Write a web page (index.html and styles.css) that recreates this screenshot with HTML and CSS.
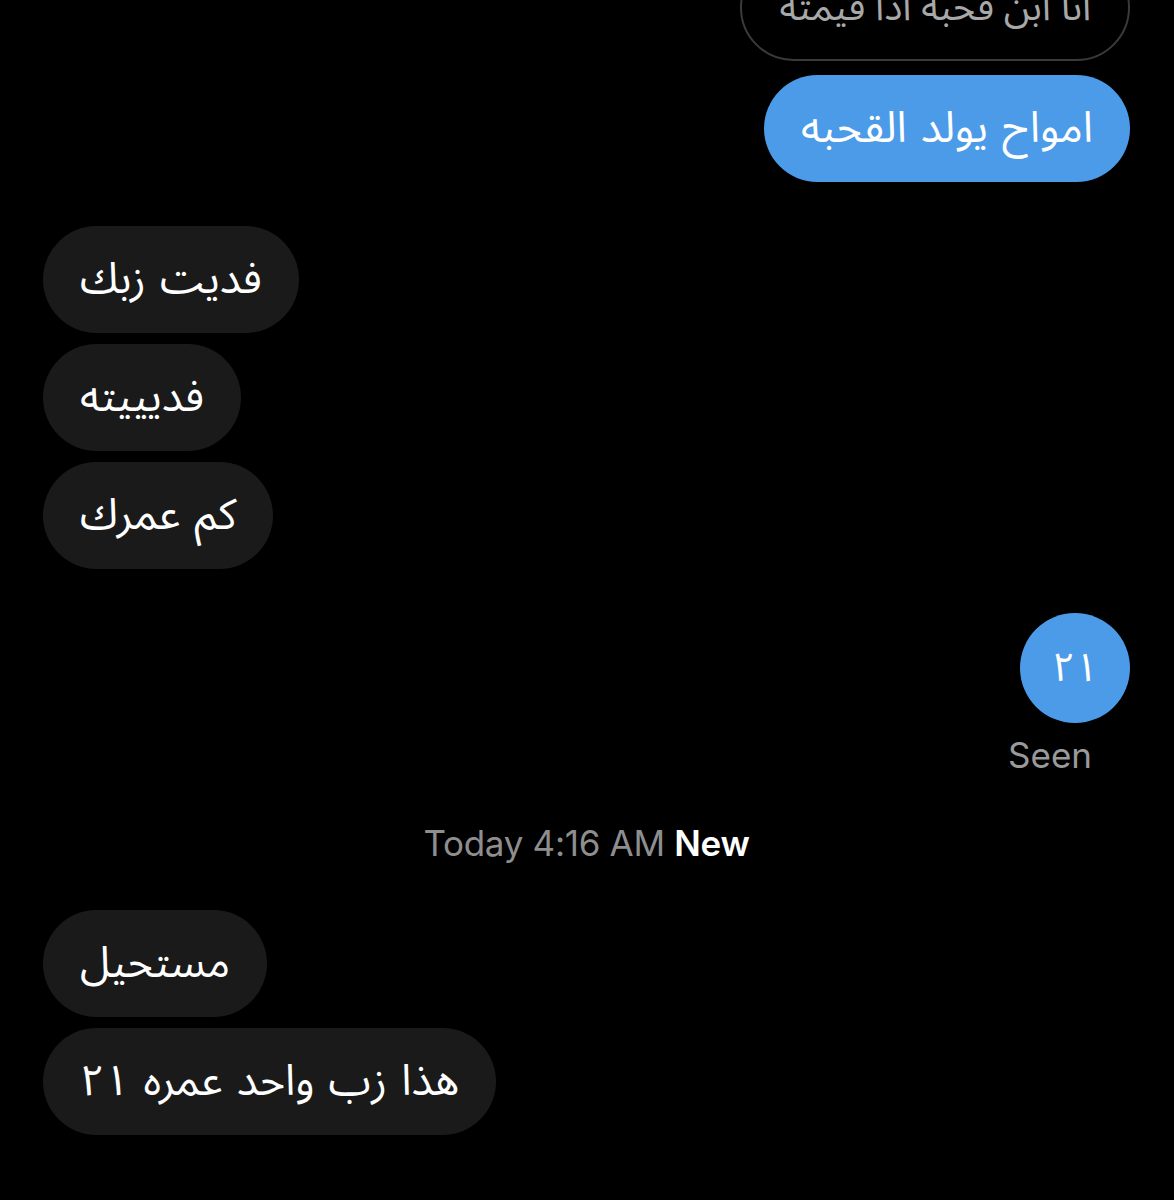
FILE: index.html
```html
<!DOCTYPE html>
<html lang="en">
<head>
<meta charset="UTF-8">
<meta name="viewport" content="width=device-width, initial-scale=1.0">
<title>Chat</title>
<link rel="stylesheet" href="styles.css">
</head>
<body>
  <div class="thread">
    <div class="row out">
      <div class="bubble outline" dir="rtl">انا ابن قحبة اذا قيمته</div>
    </div>
    <div class="row out gap-s">
      <div class="bubble blue" dir="rtl">امواح يولد القحبه</div>
    </div>

    <div class="row in gap-l">
      <div class="bubble dark" dir="rtl">فديت زبك</div>
    </div>
    <div class="row in gap-xs">
      <div class="bubble dark" dir="rtl">فديييته</div>
    </div>
    <div class="row in gap-xs">
      <div class="bubble dark" dir="rtl">كم عمرك</div>
    </div>

    <div class="row out gap-l">
      <div class="bubble blue round" dir="rtl">٢١</div>
    </div>
    <div class="seen">Seen</div>

    <div class="stamp">Today 4:16 AM <b>New</b></div>

    <div class="row in gap-m">
      <div class="bubble dark" dir="rtl">مستحيل</div>
    </div>
    <div class="row in gap-xs">
      <div class="bubble dark" dir="rtl">هذا زب واحد عمره ٢١</div>
    </div>
  </div>
</body>
</html>
```

FILE: styles.css
```css
body {
  margin: 0;
  background-color: #000;
  font-family: Inter, Roboto, "Liberation Sans", sans-serif;
  overflow: hidden;
}

.thread {
  display: flex;
  flex-direction: column;
  padding: 0 44px 0 43px;
  margin-top: -46px;
}

.row {
  display: flex;
}
.row.out {
  justify-content: flex-end;
}
.row.in {
  justify-content: flex-start;
}

.gap-xs { margin-top: 11px; }
.gap-s  { margin-top: 14px; }
.gap-m  { margin-top: 45px; }
.gap-l  { margin-top: 44px; }

.bubble {
  box-sizing: border-box;
  height: 107px;
  padding: 0 37px;
  border-radius: 54px;
  display: flex;
  align-items: center;
  font-family: "Noto Sans Arabic", "DejaVu Sans", sans-serif;
  font-size: 43px;
  word-spacing: 3px;
  color: #fff;
  white-space: nowrap;
}

.bubble.outline {
  border: 2px solid #3a3a3a;
  color: #a8a8a8;
  font-size: 38px;
  word-spacing: 0;
}

.bubble.blue {
  background-color: #4c9be8;
}

.bubble.dark {
  background-color: #1a1a1a;
}

.bubble.round {
  width: 110px;
  height: 110px;
  padding: 0;
  border-radius: 50%;
  justify-content: center;
  font-size: 40px;
}

.seen {
  align-self: flex-end;
  margin: 10px 38px 0 0;
  font-size: 35px;
  line-height: 44px;
  color: #9a9a9a;
}

.stamp {
  margin-top: 44px;
  text-align: center;
  font-size: 35px;
  line-height: 44px;
  color: #8e8e8e;
  letter-spacing: -0.3px;
}
.stamp b {
  color: #fff;
  font-weight: 600;
}
```
